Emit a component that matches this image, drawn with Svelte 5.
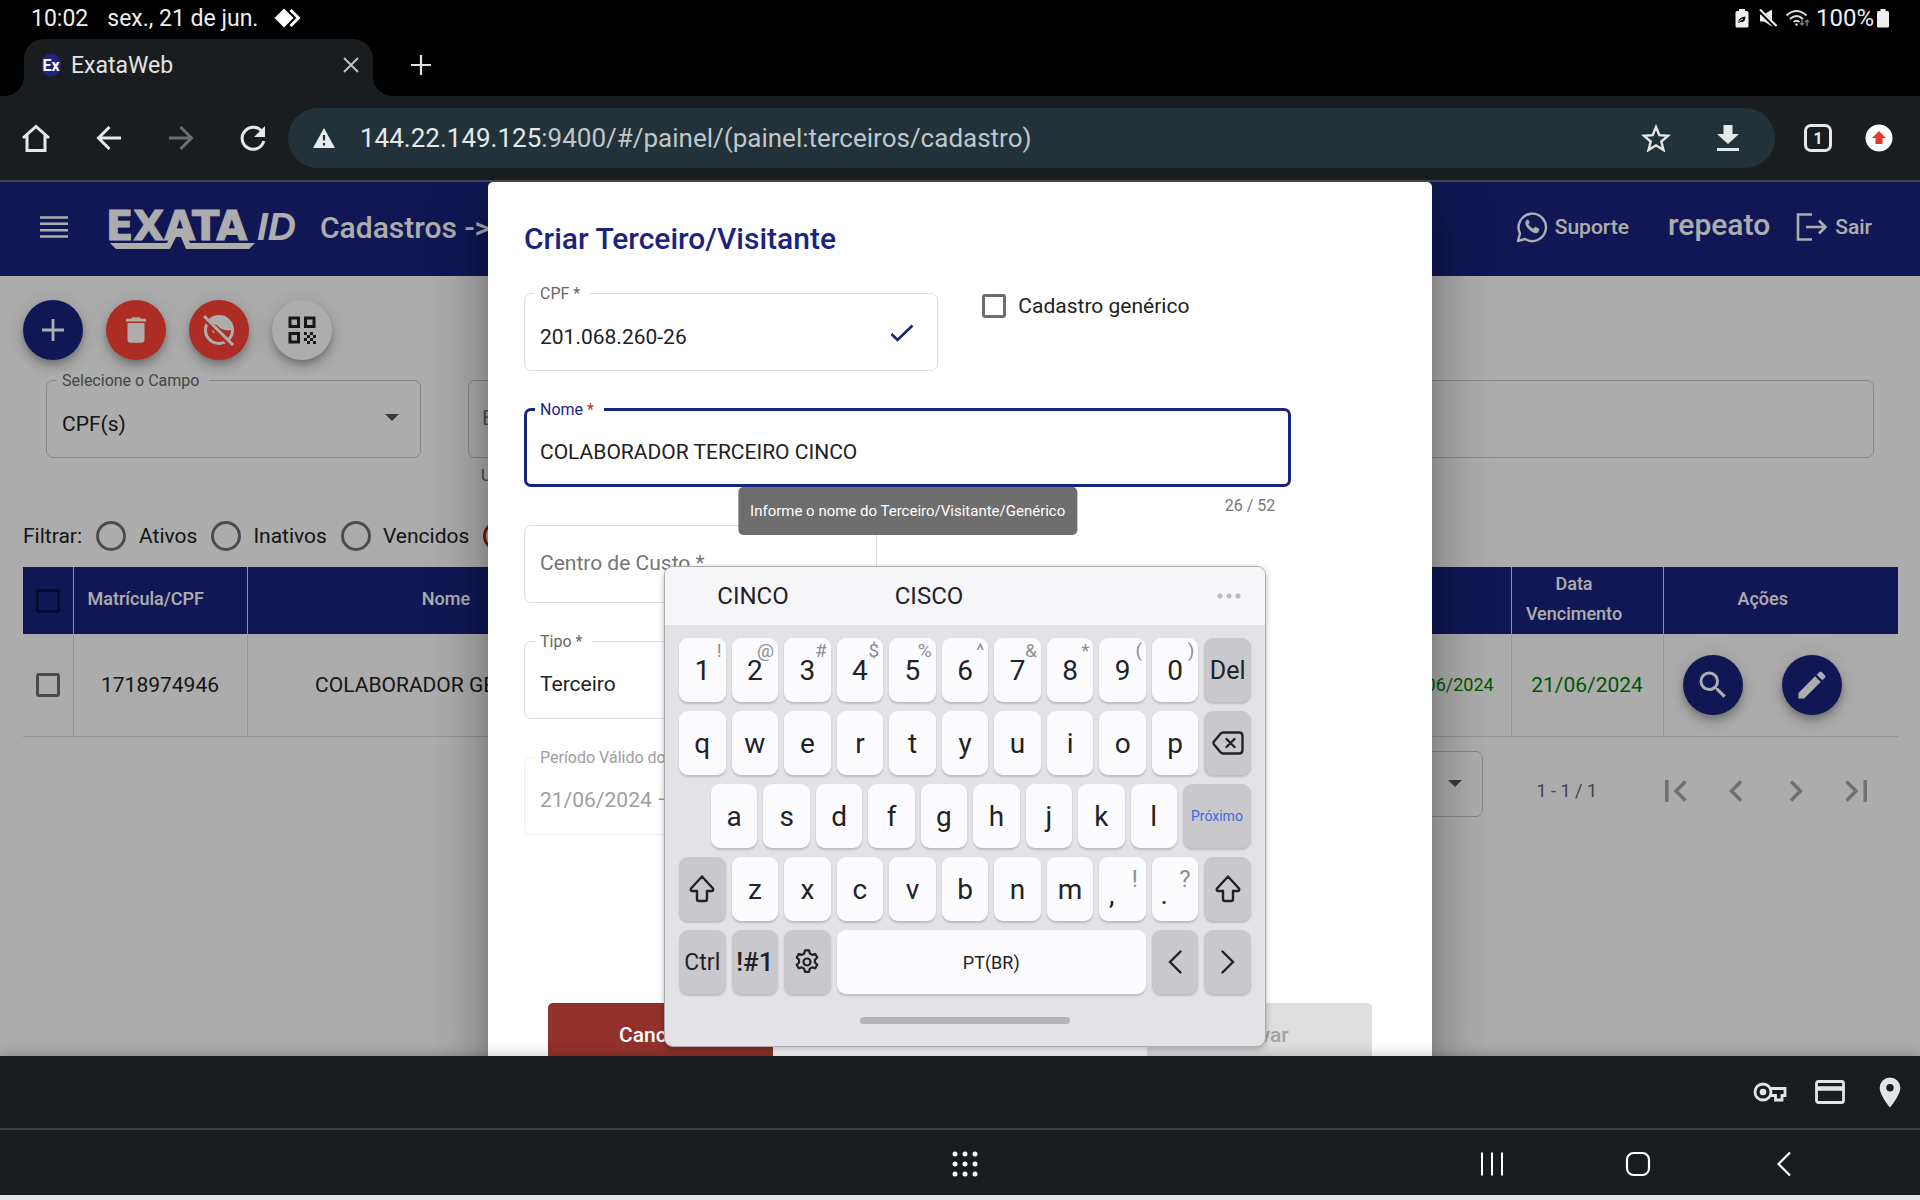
<script>
  let campo = $state('CPF(s)');
  let nome = $state('COLABORADOR TERCEIRO CINCO');
  let filtro = $state('Todos');

  const filtros = ['Ativos', 'Inativos', 'Vencidos', 'Todos'];
  const numberKeys = [
    ['1', '!'], ['2', '@'], ['3', '#'], ['4', '$'], ['5', '%'],
    ['6', '^'], ['7', '&'], ['8', '*'], ['9', '('], ['0', ')'],
  ];
  const rowOne = 'qwertyuiop'.split('');
  const rowTwo = 'asdfghjkl'.split('');
  const rowThree = 'zxcvbnm'.split('');
</script>

{#snippet shift()}
  <svg width="28" height="32" viewBox="0 0 28 32" fill="none" stroke="#222226" stroke-width="2.4" stroke-linejoin="round"><path d="M14 3.5 25 15.5Q26 18 23.500 18H19V26Q19 28 17 28H11Q9 28 9 26V18H4.500Q2 18 3 15.500Z" /></svg>
{/snippet}

{#snippet dropArrow()}
  <svg class="arrow" width="14" height="8" viewBox="0 0 14 8" aria-hidden="true"><path d="M0 0h14L7 7z" fill="currentColor" /></svg>
{/snippet}

<div class="screen">
  <div class="status">
    <span>10:02</span>
    <span class="date">sex., 21 de jun.</span>
    <svg width="28" height="20" viewBox="0 0 28 20"><path d="M10 0.500 19.500 10 10 19.500 0.500 10z" fill="#fff" /><path d="M16.500 2 24.500 10l-8 8" fill="none" stroke="#fff" stroke-width="3" /></svg>
    <span class="spring"></span>
    <svg width="14" height="19" viewBox="0 0 14 19"><path d="M4 0h6v2h2q1.500 0 1.500 1.500v13.500q0 1.500-1.500 1.500H2Q.5 18.500.5 17V3.500Q.5 2 2 2h2z" fill="#eee" /><path d="M3.500 13q-.5-4.500 7-5.500 0 6-5 5.500l-2 1z" fill="#000" /><path d="M4 12.500q2-2 4-2.500" stroke="#eee" fill="none" /></svg>
    <svg class="mute" width="18" height="18" viewBox="0 0 18 18"><path d="M1 5.500h4L13 .5v17L5 12.500H1z" fill="#eee" /><path d="M0 1 17 18" stroke="#000" stroke-width="4" /><path d="M1 .5 17.500 17" stroke="#eee" stroke-width="2" /></svg>
    <svg class="wifi" width="24" height="18" viewBox="0 0 24 18" fill="none" stroke="#ddd" stroke-width="2"><path d="M.5 6.500q10-9 20 0M4 10q6.500-6 13 0M7.500 13q3-2.500 6 0" /><circle cx="10.500" cy="15.500" r="1.200" fill="#ddd" stroke="none" /><path d="M16 10v6m-2-2 2 2 2-2M21 17v-6m-2 2 2-2 2 2" stroke="#777" stroke-width="1.500" /></svg>
    <span class="percent">100%</span>
    <svg class="battery" width="12" height="19" viewBox="0 0 12 19"><path d="M3.500 0h5v2h2q1.500 0 1.500 1.500V17q0 1.500-1.500 1.500h-9Q0 18.500 0 17V3.500Q0 2 1.500 2h2z" fill="#eee" /></svg>
  </div>

  <div class="tabs">
    <div class="tab">
      <svg width="22" height="24" viewBox="0 0 22 24"><ellipse cx="11" cy="12" rx="10" ry="11.500" fill="#23237f" /><text x="11" y="18" text-anchor="middle" class="favicon-text">Ex</text></svg>
      <span>ExataWeb</span>
      <button aria-label="Fechar guia"><svg width="16" height="16" viewBox="0 0 16 16"><path d="m1 1 14 14M15 1 1 15" stroke="#c4c7c9" stroke-width="1.800" /></svg></button>
    </div>
    <button class="new-tab" aria-label="Nova guia"><svg width="20" height="20" viewBox="0 0 20 20"><path d="M10 0v20M0 10h20" stroke="#e3e3e3" stroke-width="2.200" /></svg></button>
  </div>

  <div class="toolbar">
    <button aria-label="Página inicial"><svg width="28" height="28" viewBox="0 0 28 28" fill="none" stroke="#e6e9ea" stroke-width="3"><path d="M1 14 14 2.500 27 14M5 11v15.500h18V11" /></svg></button>
    <button aria-label="Voltar"><svg width="26" height="24" viewBox="0 0 26 24" fill="none" stroke="#e6e9ea" stroke-width="3"><path d="M25 12H3M13.500 1 2.500 12l11 11" /></svg></button>
    <button aria-label="Avançar"><svg width="26" height="24" viewBox="0 0 26 24" fill="none" stroke="#6a6e70" stroke-width="3"><path d="M1 12h22M12.500 1l11 11-11 11" /></svg></button>
    <button aria-label="Atualizar"><svg width="26" height="26" viewBox="0 0 26 26"><path d="M22.500 7.500A11 11 0 1 0 23.800 16" fill="none" stroke="#e6e9ea" stroke-width="3" /><path d="M25 1v11H14z" fill="#e6e9ea" /></svg></button>
    <div class="omnibox">
      <svg width="22" height="20" viewBox="0 0 22 20"><path d="M11 0 22 20H0z" fill="#e6e9ea" /><path d="M11 7v5.500M11 15v2.500" stroke="#233239" stroke-width="2.200" /></svg>
      <span class="url">144.22.149.125<span>:9400/#/painel/(painel:terceiros/cadastro)</span></span>
      <button aria-label="Favoritar"><svg width="30" height="28" viewBox="0 0 30 28"><path d="m15 3 3.300 8.200 8.700.6-6.700 5.700 2.200 8.500-7.500-4.700L7.500 26l2.200-8.500L3 11.800l8.700-.6z" fill="none" stroke="#e6e9ea" stroke-width="2.400" /></svg></button>
      <button aria-label="Baixar"><svg width="22" height="28" viewBox="0 0 22 28" fill="#e6e9ea"><path d="M6.500 1h9v9H22L11 20 0 10h6.500zM0 24h22v3H0z" /></svg></button>
    </div>
    <button class="tab-count" aria-label="Guias abertas">1</button>
    <button class="update" aria-label="Atualização disponível"><svg width="28" height="28" viewBox="0 0 28 28"><circle cx="14" cy="14" r="13.500" fill="#fff" /><path d="m14 7 7 7h-3.500v6h-7v-6H7z" fill="#e23b2e" /></svg></button>
  </div>

  <main>
    <div class="page">
      <header>
        <button aria-label="Menu"><svg width="28" height="22" viewBox="0 0 28 22"><path d="M0 1.500h28M0 7.800h28M0 14.200h28M0 20.500h28" stroke="#fff" stroke-width="2.600" /></svg></button>
        <svg class="logo" width="192" height="40" viewBox="0 0 192 40" role="img" aria-label="Exata ID">
          <text x="-2" y="29" class="logo-main">EXATA</text>
          <text x="149" y="29" class="logo-id">ID</text>
          <path d="M2 32H59l5-10 13-1 5 11h65l-6 6H78L73 26h-5L62 38H8z" fill="#fff" />
        </svg>
        <span class="crumb">Cadastros -&gt;</span>
        <span class="spring"></span>
        <a href="#suporte" class="support">
          <svg width="32" height="32" viewBox="0 0 32 32"><path d="M2 30l2-7.500A13.700 13.700 0 1 1 9 28z" fill="none" stroke="#fff" stroke-width="2.400" stroke-linejoin="round" /><path d="M11.500 8.500q-2.500 1-2.300 3.800 1 5.500 8.500 9.500 3.800 1.500 5.500-2.300v-1.800l-4-2-1.900 2q-3.300-1.400-5-4.400l1.400-1.800-1.600-3z" fill="#fff" /></svg>
          Suporte
        </a>
        <span class="user">repeato</span>
        <a href="#sair" class="exit">
          <svg width="32" height="28" viewBox="0 0 32 28" fill="none" stroke="#fff" stroke-width="2.600"><path d="M16 1.500H2v25h14M10 14h19M23 7.500l6.500 6.500-6.500 6.500" /></svg>
          Sair
        </a>
      </header>

      <section class="content">
        <div class="fabs">
          <button class="fab navy" aria-label="Adicionar"><svg width="22" height="22" viewBox="0 0 22 22"><path d="M11 0v22M0 11h22" stroke="#fff" stroke-width="2.800" /></svg></button>
          <button class="fab red" aria-label="Excluir"><svg width="34" height="34" viewBox="0 0 24 24" fill="#fff"><path d="M6 19c0 1.100.9 2 2 2h8c1.100 0 2-.9 2-2V7H6zM19 4h-3.500l-1-1h-5l-1 1H5v2h14z" /></svg></button>
          <button class="fab red" aria-label="Remover face"><svg width="34" height="34" viewBox="0 0 34 34"><circle cx="17" cy="17" r="13.500" fill="none" stroke="#fff" stroke-width="3" /><path d="M7 8Q16 0 26 7q5 5 4 10-10 2-15-5-4-1-8-4z" fill="#fff" /><circle cx="12" cy="18" r="1.800" fill="#fff" /><path d="M3 6 28 31" stroke="#ff4336" stroke-width="5" /><path d="M2 3 31 32" stroke="#fff" stroke-width="3" /></svg></button>
          <button class="fab light" aria-label="QR Code"><svg width="28" height="28" viewBox="0 0 28 28"><path d="M2 2h8.500v8.500H2zM17.500 2H26v8.500h-8.500zM2 17.500h8.500V26H2z" fill="none" stroke="#222" stroke-width="3" /><path d="M16 16h3v3h-3zM22 16h3v3h-3zM19 19h3v3h-3zM25 19h3v3h-3zM16 22h3v3h-3zM22 22h3v3h-3zM19 25h3v3h-3zM25 25h3v3h-3z" fill="#222" /></svg></button>
        </div>

        <div class="search">
          <fieldset class="field campo">
            <legend><label for="campo">Selecione o Campo</label></legend>
            <select id="campo" bind:value={campo}><option>CPF(s)</option></select>
            {@render dropArrow()}
          </fieldset>
          <div class="busca">
            <div class="field plain"><input aria-label="Busca" placeholder="Busca" /></div>
            <p>Utilize vírgula</p>
          </div>
        </div>

        <div class="filters">
          <span>Filtrar:</span>
          {#each filtros as f}
            <label><input type="radio" name="filtro" value={f} bind:group={filtro} />{f}</label>
          {/each}
        </div>

        <table>
          <colgroup><col class="c-check" /><col class="c-id" /><col class="c-name" /><col /><col class="c-period" /><col class="c-date" /><col class="c-actions" /></colgroup>
          <thead>
            <tr>
              <th><input type="checkbox" aria-label="Selecionar todos" /></th>
              <th class="left">Matrícula/CPF</th>
              <th>Nome</th>
              <th></th>
              <th></th>
              <th class="date-head">Data Vencimento</th>
              <th class="act-head">Ações</th>
            </tr>
          </thead>
          <tbody>
            <tr>
              <td><input type="checkbox" aria-label="Selecionar 1718974946" /></td>
              <td>1718974946</td>
              <td class="name">COLABORADOR GENÉRICO</td>
              <td></td>
              <td class="green small">21/06/2024 - 21/06/2024</td>
              <td class="green">21/06/2024</td>
              <td>
                <div class="row-actions">
                  <button class="fab navy" aria-label="Visualizar"><svg width="36" height="36" viewBox="0 0 24 24" fill="#fff"><path d="M15.500 14h-.79l-.28-.27A6.471 6.471 0 0 0 16 9.500 6.500 6.500 0 1 0 9.500 16c1.610 0 3.090-.59 4.230-1.570l.27.28v.79l5 4.990L20.490 19zm-6 0C7.010 14 5 11.990 5 9.500S7.010 5 9.500 5 14 7.010 14 9.500 11.990 14 9.500 14" /></svg></button>
                  <button class="fab navy" aria-label="Editar"><svg width="36" height="36" viewBox="0 0 24 24" fill="#fff"><path d="M3 17.250V21h3.750L17.810 9.940l-3.750-3.750zM20.710 7.040a.996.996 0 0 0 0-1.410l-2.340-2.340a.996.996 0 0 0-1.410 0l-1.830 1.830 3.750 3.750z" /></svg></button>
                </div>
              </td>
            </tr>
          </tbody>
        </table>

        <div class="paginator">
          <div class="field size">
            <select aria-label="Itens por página"><option>10</option></select>
            {@render dropArrow()}
          </div>
          <span class="range">1 - 1 / 1</span>
          <div class="pager">
            <button aria-label="Primeira página"><svg width="22" height="22" viewBox="0 0 22 22"><path d="M1.800 0v22M20.500 1.500 11 11l9.500 9.500" /></svg></button>
            <button aria-label="Página anterior"><svg width="22" height="22" viewBox="0 0 22 22"><path d="M16 1.500 6.500 11l9.500 9.500" /></svg></button>
            <button aria-label="Próxima página"><svg width="22" height="22" viewBox="0 0 22 22"><path d="m6 1.500 9.500 9.500L6 20.500" /></svg></button>
            <button aria-label="Última página"><svg width="22" height="22" viewBox="0 0 22 22"><path d="M1.500 1.500 11 11l-9.500 9.500M20.200 0v22" /></svg></button>
          </div>
        </div>
      </section>
    </div>

    <div class="backdrop">
      <div class="dialog" role="dialog" aria-labelledby="titulo">
        <h1 id="titulo">Criar Terceiro/Visitante</h1>
        <form>
          <div class="top-row">
            <fieldset class="field cpf">
              <legend><label for="cpf">CPF *</label></legend>
              <input id="cpf" value="201.068.260-26" />
              <svg width="24" height="18" viewBox="0 0 24 18"><path d="m1.500 10 6 6L22.500 1.500" fill="none" stroke="#1a237e" stroke-width="2.600" /></svg>
            </fieldset>
            <label class="generic"><input type="checkbox" />Cadastro genérico</label>
          </div>
          <div class="nome">
            <fieldset class="field focused">
              <legend><label for="nome">Nome <i>*</i></label></legend>
              <input id="nome" bind:value={nome} />
            </fieldset>
            <span class="counter">26 / 52</span>
            <div class="tooltip" role="tooltip">Informe o nome do Terceiro/Visitante/Genérico</div>
          </div>
          <div class="field plain half centro"><input aria-label="Centro de Custo" placeholder="Centro de Custo *" /></div>
          <fieldset class="field half">
            <legend><label for="tipo">Tipo *</label></legend>
            <select id="tipo"><option>Terceiro</option></select>
          </fieldset>
          <fieldset class="field half off">
            <legend><label for="periodo">Período Válido do Cadastro</label></legend>
            <input id="periodo" value="21/06/2024 – 21/06/2024" disabled />
          </fieldset>
        </form>
        <div class="dialog-actions">
          <button class="cancel">Cancelar</button>
          <button class="save" disabled>Salvar</button>
        </div>
      </div>
    </div>

    <div class="keyboard">
      <div class="suggest">
        <button>CINCO</button><button>CISCO</button><button aria-label="Sugestão vazia"></button>
        <button class="more" aria-label="Mais opções"><svg width="24" height="6" viewBox="0 0 24 6" fill="#b9b9be"><circle cx="3" cy="3" r="2.500" /><circle cx="12" cy="3" r="2.500" /><circle cx="21" cy="3" r="2.500" /></svg></button>
      </div>
      <div class="keys">
        <div class="krow">
          {#each numberKeys as [key, alt]}
            <button class="key">{key}<sup>{alt}</sup></button>
          {/each}
          <button class="key dark del">Del</button>
        </div>
        <div class="krow">
          {#each rowOne as key}<button class="key">{key}</button>{/each}
          <button class="key dark" aria-label="Apagar"><svg width="32" height="24" viewBox="0 0 32 24" fill="none" stroke="#222226" stroke-width="2.400" stroke-linejoin="round" stroke-linecap="round"><path d="M11 1.500h16q3.500 0 3.500 3.500v14q0 3.500-3.500 3.500H11q-1.500 0-2.500-1.200L2 13.500q-1-1.500 0-3L8.500 2.700Q9.500 1.500 11 1.500zM14.500 8l8 8m0-8-8 8" /></svg></button>
        </div>
        <div class="krow inset">
          {#each rowTwo as key}<button class="key">{key}</button>{/each}
          <button class="key dark next">Próximo</button>
        </div>
        <div class="krow">
          <button class="key dark" aria-label="Maiúsculas">{@render shift()}</button>
          {#each rowThree as key}<button class="key">{key}</button>{/each}
          <button class="key punct"><span>,</span><sup>!</sup></button>
          <button class="key punct"><span>.</span><sup>?</sup></button>
          <button class="key dark" aria-label="Maiúsculas à direita">{@render shift()}</button>
        </div>
        <div class="krow">
          <button class="key dark ctrl">Ctrl</button>
          <button class="key dark sym">!#1</button>
          <button class="key dark" aria-label="Configurações"><svg width="28" height="28" viewBox="0 0 24 24" fill="none" stroke="#222226" stroke-width="1.900" stroke-linejoin="round"><circle cx="12" cy="12" r="3" /><path d="M10.300 2h3.400l.7 2.700 2 1.200 2.700-.8 1.700 3-2 2v2.300l2 2-1.700 3-2.700-.8-2 1.200-.7 2.700h-3.400l-.7-2.700-2-1.200-2.700.8-1.700-3 2-2v-2.300l-2-2 1.700-3 2.700.8 2-1.200z" /></svg></button>
          <button class="key space">PT(BR)</button>
          <button class="key dark" aria-label="Cursor à esquerda"><svg width="14" height="24" viewBox="0 0 14 24"><path d="M12.500 1.500 2 12l10.500 10.500" fill="none" stroke="#222226" stroke-width="2.400" stroke-linecap="round" /></svg></button>
          <button class="key dark" aria-label="Cursor à direita"><svg width="14" height="24" viewBox="0 0 14 24"><path d="M1.500 1.500 12 12 1.500 22.500" fill="none" stroke="#222226" stroke-width="2.400" stroke-linecap="round" /></svg></button>
        </div>
      </div>
      <div class="handle"></div>
    </div>
  </main>

  <div class="autofill">
    <button aria-label="Senhas"><svg width="34" height="20" viewBox="0 0 34 20"><circle cx="10" cy="10" r="8" fill="none" stroke="#e1e5e6" stroke-width="2.800" /><circle cx="10" cy="10" r="3.300" fill="#e1e5e6" /><path d="M17.500 6.500H32v7h-3v4.500h-6.500v-4.500h-5" fill="none" stroke="#e1e5e6" stroke-width="2.800" /></svg></button>
    <button aria-label="Cartões"><svg width="30" height="24" viewBox="0 0 30 24"><rect x="1.500" y="1.500" width="27" height="21" rx="2" fill="none" stroke="#e1e5e6" stroke-width="2.800" /><path d="M2 8.500h26" stroke="#e1e5e6" stroke-width="4.500" /></svg></button>
    <button class="pin" aria-label="Endereços"><svg width="22" height="31" viewBox="0 0 22 31"><path d="M11 .5A10.300 10.300 0 0 0 .7 10.800C.7 18.500 11 30.500 11 30.500s10.300-12 10.300-19.700A10.300 10.300 0 0 0 11 .5m0 14a3.700 3.700 0 1 1 0-7.400 3.700 3.700 0 0 1 0 7.400" fill="#e1e5e6" /></svg></button>
  </div>

  <nav>
    <button class="apps" aria-label="Aplicativos"><svg width="26" height="26" viewBox="0 0 26 26" fill="#fff">{#each [3, 13, 23] as x}{#each [3, 13, 23] as y}<circle cx={x} cy={y} r="2.500" />{/each}{/each}</svg></button>
    <div class="nav-keys">
      <button aria-label="Recentes"><svg width="24" height="24" viewBox="0 0 24 24"><path d="M2 .5v23M12 .5v23M22 .5v23" stroke="#fff" stroke-width="2" /></svg></button>
      <button aria-label="Início"><svg width="26" height="26" viewBox="0 0 26 26"><rect x="2" y="2" width="22" height="22" rx="6.500" fill="none" stroke="#fff" stroke-width="2.200" /></svg></button>
      <button aria-label="Voltar"><svg width="16" height="26" viewBox="0 0 16 26"><path d="M14 1.500 2.500 13 14 24.500" fill="none" stroke="#fff" stroke-width="2.200" /></svg></button>
    </div>
  </nav>
</div>

<style>
  :global(body) { background: #e3e6ea; }
  .screen, .screen * { box-sizing: border-box; }
  .screen {
    display: flex; flex-direction: column; height: 100vh; padding-bottom: 5px; overflow: hidden;
    font-family: Roboto, "Liberation Sans", sans-serif; font-size: 21px; color: #212121;
  }
  button { background: none; border: 0; padding: 0; margin: 0; color: inherit; font: inherit; display: grid; place-items: center; }
  svg { flex: none; display: block; }
  a { color: inherit; text-decoration: none; }
  .spring { flex: 1; }

  .status { flex: none; height: 39px; padding: 0 31px 3px; display: flex; align-items: center; background: #000; color: #eee; font-size: 23px; }
  .status .date { margin: 0 16px 0 19px; }
  .percent { font-size: 24px; }
  .mute { margin-left: 10px; }
  .wifi { margin: 0 6px 0 9px; }
  .battery { margin-left: 3px; }

  .tabs { flex: none; height: 57px; display: flex; background: #000; color: #e3e3e3; padding-left: 24px; }
  .tab { position: relative; width: 349px; height: 57px; padding: 0 14px 5px 16px; display: flex; align-items: center; gap: 9px; background: #191d1f; border-radius: 20px 20px 0 0; font-size: 23px; }
  .tab::before, .tab::after { content: ""; position: absolute; bottom: 0; width: 20px; height: 20px; }
  .tab::before { right: 100%; background: radial-gradient(circle at 0 0, #000 20px, #191d1f 20px); }
  .tab::after { left: 100%; background: radial-gradient(circle at 100% 0, #000 20px, #191d1f 20px); }
  .tab button { margin-left: auto; }
  .favicon-text { font: 700 16px Roboto, sans-serif; fill: #fff; }
  .new-tab { margin-left: 38px; padding-bottom: 6px; }

  .toolbar { flex: none; height: 86px; padding: 0 27px 0 22px; display: flex; align-items: center; background: #191d1f; border-bottom: 2px solid #43484d; color: #e6e9ea; }
  .toolbar > button + button { margin-left: 46px; }
  .omnibox { flex: 1; height: 60px; margin-left: 22px; padding: 0 36px 0 25px; border-radius: 30px; background: #233239; display: flex; align-items: center; }
  .url { flex: 1; margin-left: 25px; font-size: 26px; }
  .url span { color: #bfc7ca; }
  .omnibox button + button { margin-left: 46px; }
  .toolbar .tab-count { width: 28px; height: 28px; margin-left: 29px; border: 3px solid #e6e9ea; border-radius: 7px; font-size: 16px; font-weight: 700; }
  .toolbar .tab-count + .update { margin-left: 33px; }

  main { flex: 1; min-height: 0; position: relative; overflow: hidden; background: #fefefe; }
  header { height: 94px; padding: 0 48px 4px 40px; display: flex; align-items: center; background: #1a237e; color: #fff; font-weight: 500; }
  .logo { margin: 7px 20px 0 40px; overflow: visible; }
  .logo-main { font: 700 40px "DejaVu Sans", sans-serif; fill: #fff; stroke: #fff; stroke-width: 1px; }
  .logo-id { font: italic 700 39px "Liberation Sans", sans-serif; fill: #fff; }
  .crumb { font-size: 30px; }
  .support, .exit { display: flex; align-items: center; gap: 7px; }
  .user { font-size: 30px; margin: 0 26px 5px 39px; }

  .content { padding: 24px 22px 0 23px; }
  .fabs { display: flex; gap: 23px; }
  .fab { width: 60px; height: 60px; border-radius: 50%; box-shadow: 0 4px 6px -1px #0003, 0 8px 12px #0002, 0 1px 22px #0002; }
  .navy { background: #1a237e; }
  .red { background: #ff4336; }
  .light { background: #fff; }

  .field { position: relative; display: flex; align-items: center; min-width: 0; height: 86px; margin: 0; padding: 2px 15px 0; border: 1px solid #dedede; border-radius: 7px; }
  .field.plain { height: 78px; padding-bottom: 3px; padding-top: 0; }
  .field legend { height: 16px; line-height: 18px; font-size: 16px; color: #666; padding: 0 10px 0 5px; margin-left: -5px; white-space: nowrap; }
  .field input, .field select { width: 100%; height: 66px; padding: 0; border: 0; outline: 0; background: none; appearance: none; font: inherit; color: inherit; opacity: 1; }
  .field ::placeholder { color: #757575; opacity: 1; }
  .arrow { position: absolute; right: 21px; top: 50%; color: #555; pointer-events: none; }
  .search { display: flex; align-items: flex-start; gap: 47px; margin: 12px 24px 0 23px; }
  .search .field, .size { border-color: #c4c4c4; }
  .campo { flex: 0 0 375px; }
  .campo .arrow { top: 26px; }
  .busca { flex: 1; padding-top: 8px; }
  .busca .field { padding-left: 13px; }
  .busca p { margin: 0 0 13px 13px; line-height: 36px; font-size: 16px; color: #666; }

  .filters { height: 60px; padding-bottom: 2px; display: flex; align-items: center; }
  .filters > span { margin-right: 14px; }
  .filters label { display: flex; align-items: center; gap: 13px; margin-right: 14px; }
  .filters label:nth-of-type(n + 2) { gap: 12px; }
  input[type="radio"] { appearance: none; width: 30px; height: 30px; margin: 0; border: 3px solid #707070; border-radius: 50%; }
  input[type="radio"]:checked { border-color: #b71c1c; }
  input[type="checkbox"] { appearance: none; display: block; width: 24px; height: 24px; margin: 0 auto; border: 3px solid #6e6e6e; border-radius: 3px; }

  table { width: 100%; table-layout: fixed; border-collapse: collapse; text-align: center; }
  .c-check { width: 50px; } .c-id { width: 174px; } .c-name { width: 398px; } .c-period { width: 240px; } .c-date { width: 152px; } .c-actions { width: 235px; }
  thead tr { height: 67px; background: #1a237e; color: #fff; }
  th { padding: 0 24px 4px 14px; font-size: 18px; font-weight: 500; line-height: 30px; border-right: 1px solid #d8d8e8; }
  th:first-child { padding: 0; }
  th:first-child input { border-color: #090e48; }
  th.left { text-align: left; }
  th:nth-child(3) { padding: 0 0 4px; }
  th:last-child, td:last-child { border-right: 0; }
  th.date-head { padding: 0 36px 4px 10px; }
  th.act-head { padding-right: 50px; }
  tbody tr { height: 102px; border-bottom: 1px solid #dadada; }
  td { padding: 0; border-right: 1px solid #dadada; }
  td.name { padding-right: 8px; }
  .green { color: #008000; }
  .small { font-size: 18px; }
  .row-actions { display: flex; gap: 39px; padding-left: 19px; }

  .paginator { display: flex; align-items: center; justify-content: flex-end; margin-top: 14px; padding-right: 12px; }
  .size { width: 120px; height: 66px; }
  .size .arrow { top: 28px; right: 20px; }
  .range { margin: 13px 49px 0 53px; font-size: 18px; color: #666; }
  .pager { display: flex; padding-top: 15px; }
  .pager button { width: 60px; }
  .pager svg { fill: none; stroke: #a6a6a6; stroke-width: 3.500; }

  .backdrop { position: absolute; inset: 0; background: rgb(0 0 0 / 32%); display: flex; justify-content: center; align-items: flex-start; overflow: hidden; }
  .dialog { width: 944px; max-width: 100%; min-height: 100%; padding: 37px 36px 0; background: #fff; border-radius: 5px 5px 0 0; box-shadow: 0 14px 19px -9px #0003, 0 30px 48px 4px #0003, 0 11px 58px 10px #0002; }
  h1 { margin: 0 0 26px; font-size: 30px; line-height: 40px; font-weight: 500; color: #1a237e; }
  form { width: 88%; display: flex; flex-direction: column; gap: 30px; }
  .top-row { display: flex; align-items: flex-start; gap: 44px; }
  .cpf { flex: 0 0 54%; padding-right: 23px; }
  .cpf svg { margin-bottom: 8px; }
  .generic { display: flex; align-items: center; gap: 12px; margin-top: 9px; line-height: 24px; }
  .nome { position: relative; }
  .focused { border: 3px solid #1a237e; padding: 2px 13px 0; }
  .focused legend { color: #1a237e; }
  .focused i { color: #c62828; font-style: normal; }
  .counter { position: absolute; right: 16px; top: 100%; line-height: 37px; font-size: 16px; color: #777; }
  .tooltip { position: absolute; z-index: 1; top: 100%; left: 50%; translate: -50% 0; padding: 0 12px; line-height: 48px; font-size: 15px; color: #fff; background: #6e6e6e; border-radius: 5px; white-space: nowrap; }
  .half { width: 46%; }
  .centro { margin-top: 8px; }
  .off { border-color: #efefef; color: #9e9e9e; }
  .off legend { color: #9e9e9e; }
  .dialog-actions { display: flex; justify-content: space-between; padding: 168px 24px 0; }
  .dialog-actions button { width: 225px; height: 64px; border-radius: 5px; font-weight: 500; }
  .cancel { background: #93312c; color: #fff; }
  .save { background: #dfdfdf; color: #a3a3a3; }

  .keyboard { position: absolute; z-index: 2; left: 664px; bottom: 9px; width: 602px; height: 481px; background: #e3e3e7; border: 1px solid #acacb0; border-radius: 9px; box-shadow: 0 2px 6px #0004; overflow: hidden; color: #222226; }
  .suggest { height: 58px; background: #f6f6f9; display: flex; font-size: 24px; }
  .suggest button { flex: 0 0 176px; }
  .suggest .more { flex: 1; }
  .keys { padding: 13px 14px 0; display: grid; gap: 9px; }
  .krow { display: flex; gap: 6px; }
  .inset { padding-left: 32px; }
  .key { position: relative; flex: 1 1 0; min-width: 0; height: 64px; border-radius: 9px; background: #fcfcfe; box-shadow: 0 2px 2px #0000002b; font-size: 28px; }
  .dark { background: #c8c8cd; }
  .key sup { position: absolute; top: 3px; right: 4px; font-size: 19px; line-height: 20px; color: #8e8e93; }
  .del { font-size: 25px; }
  .next { flex: 0 0 68px; font-size: 14px; color: #3f6ad8; }
  .punct span { padding: 10px 22px 0 0; }
  .punct sup { top: 8px; right: 8px; font-size: 24px; line-height: 28px; }
  .ctrl { font-size: 23px; }
  .sym { font-size: 26px; font-weight: 500; }
  .space { flex: 0 0 309px; font-size: 18px; }
  .handle { width: 210px; height: 7px; margin: 23px auto 0; border-radius: 4px; background: #b4b4b9; }

  .autofill { position: relative; flex: none; height: 74px; padding: 0 19px; display: flex; align-items: center; justify-content: flex-end; gap: 28px; background: #191d1f; border-bottom: 2px solid #3c4043; box-shadow: 0 -2px 12px #0003; }
  .pin { margin-left: 6px; }
  nav { flex: none; position: relative; height: 65px; padding: 3px 123px 0 0; display: flex; align-items: center; justify-content: flex-end; background: #191d1f; }
  .apps { position: absolute; left: 952px; }
  .nav-keys { display: flex; align-items: center; gap: 120px; }
  .nav-keys button { width: 26px; }
</style>
